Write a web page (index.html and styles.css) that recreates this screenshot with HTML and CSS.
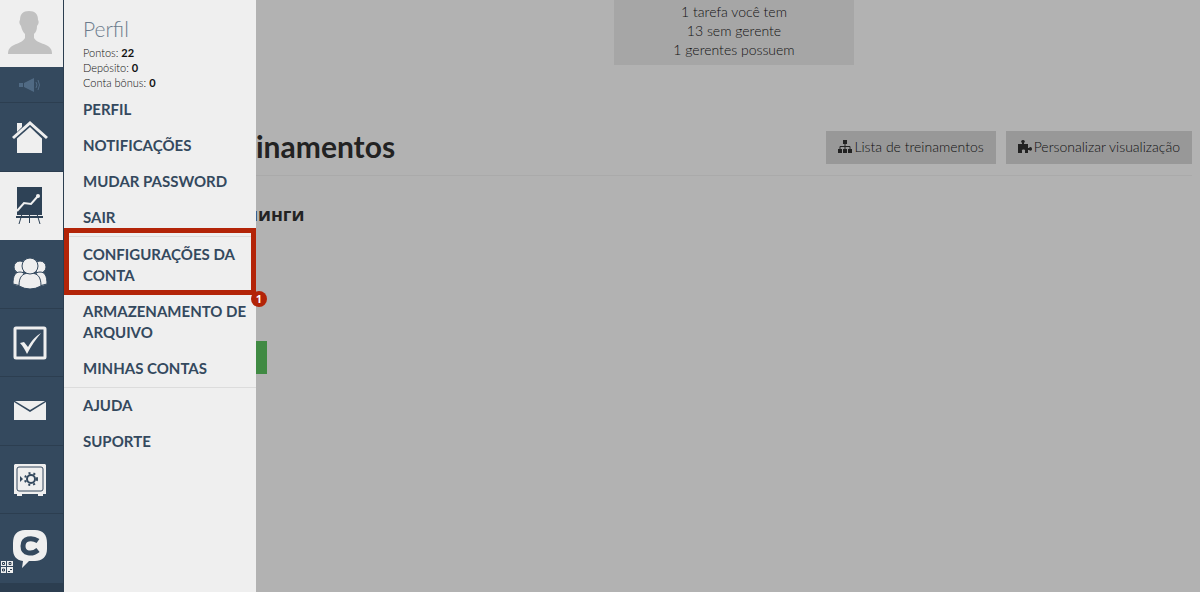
FILE: index.html
```html
<!DOCTYPE html>
<html lang="pt">
<head>
    <meta charset="UTF-8">
    <meta name="viewport" content="width=device-width, initial-scale=1.0">
    <title>Lista de treinamentos</title>
    <link rel="stylesheet" href="styles.css">
</head>
<body>
    <nav class="rail" aria-label="Menu principal">
        <a href="#" class="rail-item avatar" aria-label="Perfil">
            <svg width="46" height="44" viewBox="0 0 46 44" fill="#c1c1c1">
                <path d="M22 0c6 0 9 3 9 9 1 1 1 4-1 6 0 4-1 6-3 8v4c2 4 8 5 12 7 4 2 6 4 6 9H1c0-5 2-7 6-9 4-2 9-3 11-7v-4c-2-2-3-4-4-8-2-2-2-5-1-6 0-6 3-9 9-9z"/>
            </svg>
        </a>
        <a href="#" class="rail-item news" aria-label="Novidades">
            <svg width="22" height="16" viewBox="0 0 22 16" fill="#506a84">
                <rect x="0" y="6" width="4" height="4"/>
                <path d="M5 6l10-5v14L5 10z"/>
                <path d="M17 5q2 3 0 6M19 3q3 5 0 10" fill="none" stroke="#506a84"/>
            </svg>
        </a>
        <a href="#" class="rail-item" aria-label="Início">
            <svg width="36" height="34" viewBox="0 0 36 34" fill="#efefef">
                <path d="M5 3h5v4l-5 5z"/>
                <path d="M1 18L18 3l17 15" fill="none" stroke="#efefef" stroke-width="3"/>
                <path d="M5 18.500L18 7l12 11.500V33H5z"/>
            </svg>
        </a>
        <a href="#" class="rail-item active" aria-label="Treinamentos">
            <svg width="28" height="38" viewBox="0 0 28 38">
                <rect x="1" y="0" width="25" height="28" fill="#2e4256"/>
                <path d="M1 24l7-8 7 1 7-8" fill="none" stroke="#efefef" stroke-width="2"/>
                <circle cx="22" cy="9" r="2" fill="#efefef"/>
                <path d="M0 30h27" fill="none" stroke="#2e4256" stroke-width="2"/>
                <path d="M6 27l-3 10M13.500 27v9M21 27l3 10" fill="none" stroke="#2e4256"/>
            </svg>
        </a>
        <a href="#" class="rail-item" aria-label="Usuários">
            <svg width="36" height="32" viewBox="0 0 36 32" fill="#efefef" stroke="#34495e">
                <circle cx="8" cy="9" r="6"/>
                <circle cx="28" cy="9" r="6"/>
                <path d="M1 26c0-8 2-12 7-12s6 4 6 12q-7 3-13 0zM35 26c0-8-2-12-7-12s-6 4-6 12q7 3 13 0z"/>
                <path d="M7 28c0-9 3-13 11-13s11 4 11 13q-11 6-22 0z"/>
                <circle cx="18" cy="8" r="8"/>
            </svg>
        </a>
        <a href="#" class="rail-item" aria-label="Tarefas">
            <svg width="34" height="34" viewBox="0 0 34 34">
                <rect x="2" y="2" width="30" height="30" rx="1" fill="none" stroke="#efefef" stroke-width="3"/>
                <path d="M7 17l4-1 4 5C19 14 23 10 28 7 23 13 18 20 14 28 12 24 10 20 7 17z" fill="#efefef"/>
            </svg>
        </a>
        <a href="#" class="rail-item" aria-label="Mensagens">
            <svg width="32" height="20" viewBox="0 0 32 20" fill="#efefef">
                <path d="M1 0h30L16 9z"/>
                <path d="M0 1l16 10L32 1v18H0z"/>
            </svg>
        </a>
        <a href="#" class="rail-item" aria-label="Cofre">
            <svg width="34" height="34" viewBox="0 0 34 34">
                <path d="M2 1h30l1 1v29h-3v2h-5v-2H9v2H4v-2H1V2z" fill="#efefef"/>
                <rect x="4" y="4" width="26" height="24" rx="2" fill="none" stroke="#34495e"/>
                <circle cx="18" cy="16" r="4" fill="none" stroke="#34495e" stroke-width="2"/>
                <circle cx="18" cy="16" r="6" fill="none" stroke="#34495e" stroke-width="2" stroke-dasharray="2 3"/>
                <path d="M7 13l3 3-3 3z" fill="#34495e"/>
            </svg>
        </a>
        <a href="#" class="rail-item chat" aria-label="Chat">
            <svg width="34" height="38" viewBox="0 0 34 38">
                <path d="M12 0h10c8 0 12 5 12 13v6c0 8-5 12-12 12h-6l-7 7 1-7C3 30 0 26 0 19v-6C0 5 4 0 12 0z" fill="#efefef"/>
                <path d="M25 11c-6-4-15-3-15 5s9 9 15 4" fill="none" stroke="#34495e" stroke-width="5"/>
            </svg>
            <svg class="qr" width="12" height="12" viewBox="0 0 12 12">
                <path d="M0 0h5v5H0zM6 0h6v5H6zM0 6h5v6H0zM6 6h6v6H6z" fill="#efefef"/>
                <path d="M1.500 1.500h2v2h-2zM8 1.500h2v2H8zM1.500 8h2v2h-2zM7 10.500h2M9 8.500h2" fill="none" stroke="#2c3e50"/>
            </svg>
        </a>
    </nav>

    <aside class="drawer">
        <div class="profile">
            <h2>Perfil</h2>
            <p>Pontos: <b>22</b></p>
            <p>Depósito: <b>0</b></p>
            <p>Conta bônus: <b>0</b></p>
        </div>
        <ul class="menu">
            <li><a href="#">PERFIL</a></li>
            <li><a href="#">NOTIFICAÇÕES</a></li>
            <li><a href="#">MUDAR PASSWORD</a></li>
            <li><a href="#">SAIR</a></li>
            <li class="divided marked"><a href="#">CONFIGURAÇÕES DA CONTA</a><span class="badge">1</span></li>
            <li><a href="#">ARMAZENAMENTO DE ARQUIVO</a></li>
            <li><a href="#">MINHAS CONTAS</a></li>
            <li class="divided"><a href="#">AJUDA</a></li>
            <li><a href="#">SUPORTE</a></li>
        </ul>
    </aside>

    <main class="content">
        <div class="summary">
            <p>1 tarefa você tem</p>
            <p>13 sem gerente</p>
            <p>1 gerentes possuem</p>
        </div>
        <header class="page-header">
            <h1>inamentos</h1>
            <div class="actions">
                <button type="button" class="btn">
                    <svg width="14" height="13" viewBox="0 0 14 13" fill="#222">
                        <path d="M5 0h4v4H5zM0 9h4v4H0zM5 9h4v4H5zM10 9h4v4h-4z"/>
                        <path d="M7 4v5M2 9V6.500h10V9" fill="none" stroke="#222"/>
                    </svg>
                    Lista de treinamentos
                </button>
                <button type="button" class="btn">
                    <svg width="14" height="13" viewBox="0 0 14 13" fill="#222">
                        <path d="M0 4h4V3C2 1 4 0 5 0s3 1 1 3v1h4v4h1c1-2 3-1 3 1s-2 2-3 1h-1v3H7v-2c1-2-4-2-3 0v2H0z"/>
                    </svg>
                    Personalizar visualização
                </button>
            </div>
        </header>
        <h3>нинги</h3>
        <button type="button" class="add-btn" aria-label="Adicionar"></button>
    </main>
</body>
</html>
```

FILE: styles.css
```css
* {
    margin: 0;
    padding: 0;
    box-sizing: border-box;
}

body {
    font-family: Lato, "Open Sans", sans-serif;
    font-size: 14px;
    font-weight: 300;
    color: #111;
    background-color: #b2b2b2;
    display: flex;
    height: 100vh;
    overflow: hidden;
}

b {
    font-weight: 700;
}

.rail {
    width: 64px;
    flex-shrink: 0;
    background-color: #2c3e50;
    border-right: 1px solid #2c3e50;
}

.rail-item {
    display: flex;
    align-items: center;
    justify-content: center;
    height: 69px;
    padding-right: 4px;
    background-color: #34495e;
    border-bottom: 1px solid #2c3e50;
}

.rail-item:nth-child(even) {
    height: 68px;
}

.rail-item.avatar {
    height: 67px;
    background-color: #efefef;
    border-color: #efefef;
}

.rail-item.news {
    height: 36px;
}

.rail-item.active {
    background-color: #efefef;
    border-color: #efefef;
}

.rail-item.chat {
    position: relative;
    height: 70px;
}

.qr {
    position: absolute;
    left: 1px;
    bottom: 10px;
}

.drawer {
    width: 192px;
    flex-shrink: 0;
    padding-top: 18px;
    background-color: #efefef;
    z-index: 1;
}

.profile {
    height: 74px;
    padding-left: 19px;
    font-size: 11px;
    line-height: 15px;
}

.profile h2 {
    font-size: 21px;
    font-weight: 300;
    line-height: 22px;
    color: #6c7b8c;
    margin-bottom: 5px;
}

.menu {
    list-style: none;
}

.menu a {
    display: block;
    padding: 7px 8px 8px 19px;
    font-size: 15px;
    font-weight: 700;
    line-height: 21px;
    color: #34495e;
    text-decoration: none;
}

.divided {
    border-top: 1px solid #dcdcdc;
}

.marked {
    position: relative;
}

.marked::after {
    content: "";
    position: absolute;
    top: -9px;
    left: 0;
    right: 0;
    bottom: -1px;
    border: 5px solid #b32408;
}

.badge {
    position: absolute;
    right: -11px;
    bottom: -13px;
    width: 16px;
    height: 16px;
    border-radius: 50%;
    background-color: #b32408;
    color: #fff;
    font-family: "Open Sans", sans-serif;
    font-size: 11px;
    font-weight: 700;
    line-height: 16px;
    text-align: center;
    z-index: 1;
}

.content {
    flex: 1;
    padding-right: 8px;
    overflow: hidden;
}

.summary {
    width: 240px;
    height: 65px;
    margin: 0 338px 0 auto;
    padding-top: 2px;
    background-color: #a6a6a6;
    line-height: 19px;
    text-align: center;
}

.page-header {
    display: flex;
    align-items: flex-start;
    justify-content: space-between;
    margin-top: 66px;
    padding-bottom: 11px;
    border-bottom: 1px solid #aaa;
}

h1 {
    font-size: 30px;
    line-height: 31px;
    color: #222;
}

.actions {
    display: flex;
    gap: 10px;
}

.btn {
    display: flex;
    align-items: center;
    gap: 2px;
    height: 33px;
    padding: 0 12px 2px;
    border: none;
    background-color: #989898;
    color: #111;
    font-family: inherit;
    font-size: 14px;
    font-weight: 300;
    cursor: pointer;
}

h3 {
    margin-top: 26px;
    font-family: "Open Sans", sans-serif;
    font-size: 18px;
    line-height: 24px;
    text-indent: -10px;
    color: #222;
}

.add-btn {
    display: block;
    width: 11px;
    height: 33px;
    margin-top: 115px;
    border: none;
    background-color: #408a43;
    cursor: pointer;
}
```
